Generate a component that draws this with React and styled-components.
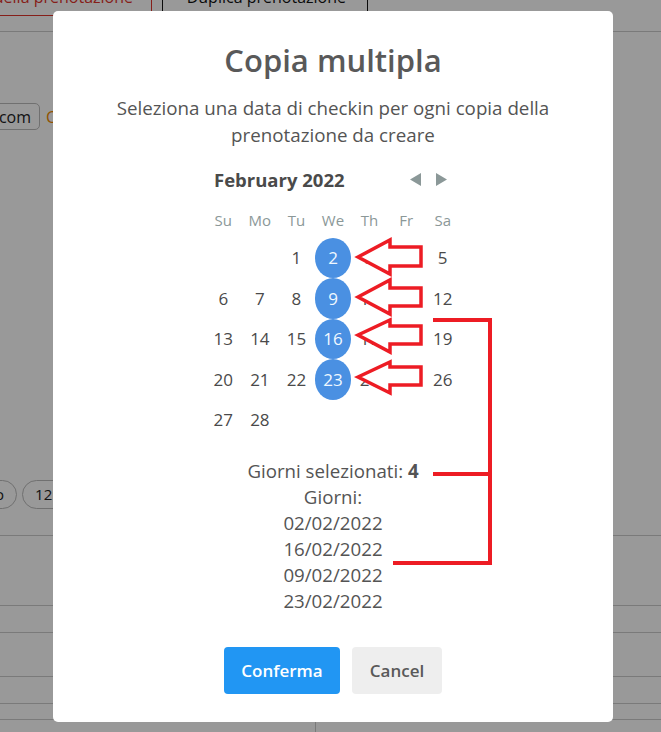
import React from "react";
import styled, { createGlobalStyle } from "styled-components";

const GlobalStyle = createGlobalStyle`
  html, body {
    margin: 0;
    padding: 0;
    background: #fff;
    font-family: "Open Sans", "Noto Sans", sans-serif;
    overflow: hidden;
  }
`;

/* ---------- page behind the dialog ---------- */

const Page = styled.div`
  width: 661px;
  height: 732px;
  overflow: hidden;
  color: #222;
`;

const Tabs = styled.div`
  display: flex;
  gap: 10px;
  margin: -14px 0 0 -88px;
  height: 30px;
`;

const Tab = styled.div`
  box-sizing: border-box;
  width: ${(p) => p.$w}px;
  height: 30px;
  padding: 0 ${(p) => (p.$active ? 18 : 21)}px;
  font-size: 16px;
  line-height: 20px;
  white-space: nowrap;
  text-align: right;
  overflow: hidden;
  border: 1px solid ${(p) => (p.$active ? "#e0342c" : "#111")};
  color: ${(p) => (p.$active ? "#e0342c" : "#111")};
`;

const HeaderLine = styled.div`
  height: 15px;
  border-bottom: 1px solid #ccc;
`;

const FormRow = styled.div`
  display: flex;
  align-items: center;
  gap: 6px;
  margin: 71px 0 0 -44px;
`;

const Input = styled.div`
  box-sizing: border-box;
  width: 84px;
  height: 27px;
  padding: 0 8px;
  border: 1px solid #bbb;
  border-radius: 5px;
  font-size: 16px;
  display: flex;
  align-items: center;
  justify-content: flex-end;
  overflow: hidden;
  white-space: nowrap;
`;

const OrangeText = styled.span`
  color: #f08a00;
  font-size: 16px;
`;

const ChipsRow = styled.div`
  display: flex;
  gap: 5px;
  margin: 350px 0 0 -57px;
`;

const Chip = styled.div`
  box-sizing: border-box;
  height: 29px;
  padding: 0 12px;
  border: 1px solid #bbb;
  border-radius: 15px;
  font-size: 15px;
  line-height: 27px;
  white-space: nowrap;
`;

const TableRow = styled.div`
  height: ${(p) => p.$h}px;
  border-bottom: 1px solid #ccc;
  display: grid;
  grid-template-columns: 316px 1fr;
`;

const Cell = styled.div`
  border-right: ${(p) => (p.$split ? "1px solid #ccc" : "none")};
`;

/* ---------- dialog ---------- */

const Overlay = styled.div`
  position: fixed;
  inset: 0;
  background: rgba(0, 0, 0, 0.4);
  display: flex;
  align-items: center;
  justify-content: center;
  padding-left: 5px;
`;

const Modal = styled.div`
  box-sizing: border-box;
  width: 560px;
  height: 711px;
  background: #fff;
  border-radius: 5px;
  padding: 31px 10px 0;
  display: flex;
  flex-direction: column;
  align-items: center;
`;

const Title = styled.h2`
  margin: 0;
  font-size: 31px;
  line-height: 36px;
  font-weight: 600;
  color: #595959;
`;

const Subtitle = styled.p`
  margin: 16px 0 0;
  font-size: 18.75px;
  line-height: 27px;
  color: #545454;
  text-align: center;
  white-space: nowrap;
`;

const Calendar = styled.div`
  margin-top: 20px;
  width: 256px;
`;

const Caption = styled.div`
  display: flex;
  align-items: center;
  justify-content: space-between;
  height: 24px;
  padding: 0 14px 0 9px;
`;

const MonthName = styled.span`
  font-size: 18.5px;
  font-weight: 700;
  color: #4a4a4a;
`;

const Nav = styled.div`
  display: flex;
  gap: 15px;
`;

const NavArrow = styled.svg`
  width: 11px;
  height: 13px;
  display: block;
`;

const Grid = styled.div`
  display: grid;
  grid-template-columns: repeat(7, 1fr);
  grid-template-rows: 36px;
  grid-auto-rows: 40.5px;
  margin-top: 10px;
`;

const Weekday = styled.div`
  display: flex;
  align-items: center;
  justify-content: center;
  font-size: 15px;
  color: #8b9898;
`;

const Day = styled.div`
  display: flex;
  align-items: center;
  justify-content: center;
  font-size: 17px;
  border-radius: 50%;
  color: ${(p) => (p.$selected ? "#f0f8ff" : "#4a4a4a")};
  background: ${(p) => (p.$selected ? "#4a90e2" : "transparent")};
`;

const Summary = styled.div`
  margin-top: 18px;
  font-size: 18.7px;
  line-height: 26px;
  color: #545454;
  text-align: center;
`;

const Buttons = styled.div`
  display: flex;
  gap: 12px;
  margin-top: 33px;
`;

const Button = styled.button`
  width: ${(p) => p.$w}px;
  height: 47px;
  padding: 0;
  border: none;
  border-radius: 4px;
  font-family: inherit;
  font-size: 17px;
  font-weight: 600;
  background: ${(p) => (p.$primary ? "#2196f3" : "#eeeeee")};
  color: ${(p) => (p.$primary ? "#fff" : "#595959")};
`;

const Marks = styled.svg`
  position: fixed;
  left: 0;
  top: 0;
  pointer-events: none;
`;

const weekdays = ["Su", "Mo", "Tu", "We", "Th", "Fr", "Sa"];
const selected = [2, 9, 16, 23];
const picked = ["02/02/2022", "16/02/2022", "09/02/2022", "23/02/2022"];

// feb 2022 starts on tuesday
const cells = [null, null, ...Array.from({ length: 28 }, (_, i) => i + 1)];

const arrows = [
  { tip: 257, top: 240, bottom: 274, s1: 247, s2: 266 },
  { tip: 297, top: 280, bottom: 314, s1: 288, s2: 306 },
  { tip: 335, top: 320, bottom: 352, s1: 326, s2: 344 },
  { tip: 377, top: 362, bottom: 393, s1: 367, s2: 385 },
];

function arrowPoints(a) {
  return [
    [358, a.tip],
    [390, a.top],
    [390, a.s1],
    [421, a.s1],
    [421, a.s2],
    [390, a.s2],
    [390, a.bottom],
  ]
    .map((p) => p.join(","))
    .join(" ");
}

function App() {
  return (
    <>
      <GlobalStyle />
      <Page>
        <Tabs>
          <Tab $active $w={240}>Dettagli della prenotazione</Tab>
          <Tab $w={206}>Duplica prenotazione</Tab>
        </Tabs>
        <HeaderLine />
        <FormRow>
          <Input>info@mail.com</Input>
          <OrangeText>Copia</OrangeText>
        </FormRow>
        <ChipsRow>
          <Chip>Giorno</Chip>
          <Chip>12:00</Chip>
        </ChipsRow>
        <TableRow $h={26} />
        <TableRow $h={69} />
        <TableRow $h={26} />
        <TableRow $h={43} />
        <TableRow $h={26} />
        <TableRow $h={15} />
        <TableRow $h={30}>
          <Cell $split />
          <Cell />
        </TableRow>
      </Page>

      <Overlay>
        <Modal>
          <Title>Copia multipla</Title>
          <Subtitle>
            Seleziona una data di checkin per ogni copia della
            <br />
            prenotazione da creare
          </Subtitle>

          <Calendar>
            <Caption>
              <MonthName>February 2022</MonthName>
              <Nav>
                <NavArrow viewBox="0 0 11 13">
                  <path d="M11 0 L0 6.5 L11 13 Z" fill="#8b9898" />
                </NavArrow>
                <NavArrow viewBox="0 0 11 13">
                  <path d="M0 0 L11 6.5 L0 13 Z" fill="#8b9898" />
                </NavArrow>
              </Nav>
            </Caption>
            <Grid>
              {weekdays.map((w) => (
                <Weekday key={w}>{w}</Weekday>
              ))}
              {cells.map((d, i) => (
                <Day key={i} $selected={selected.includes(d)}>
                  {d}
                </Day>
              ))}
            </Grid>
          </Calendar>

          <Summary>
            Giorni selezionati: <b>4</b>
            <br />
            Giorni:
            {picked.map((p) => (
              <React.Fragment key={p}>
                <br />
                {p}
              </React.Fragment>
            ))}
          </Summary>

          <Buttons>
            <Button $primary $w={116}>Conferma</Button>
            <Button $w={90}>Cancel</Button>
          </Buttons>
        </Modal>
      </Overlay>

      {/* red annotation drawn over the screenshot */}
      <Marks width="661" height="732" viewBox="0 0 661 732">
        {arrows.map((a, i) => (
          <polygon
            key={i}
            points={arrowPoints(a)}
            fill="#fff"
            stroke="#ed1c24"
            strokeWidth="3.5"
            strokeLinejoin="miter"
          />
        ))}
        <polyline
          points="433,320 490,320 490,563 393,563"
          fill="none"
          stroke="#ed1c24"
          strokeWidth="4"
        />
        <line x1="433" y1="474" x2="490" y2="474" stroke="#ed1c24" strokeWidth="4" />
      </Marks>
    </>
  );
}

export default App;
